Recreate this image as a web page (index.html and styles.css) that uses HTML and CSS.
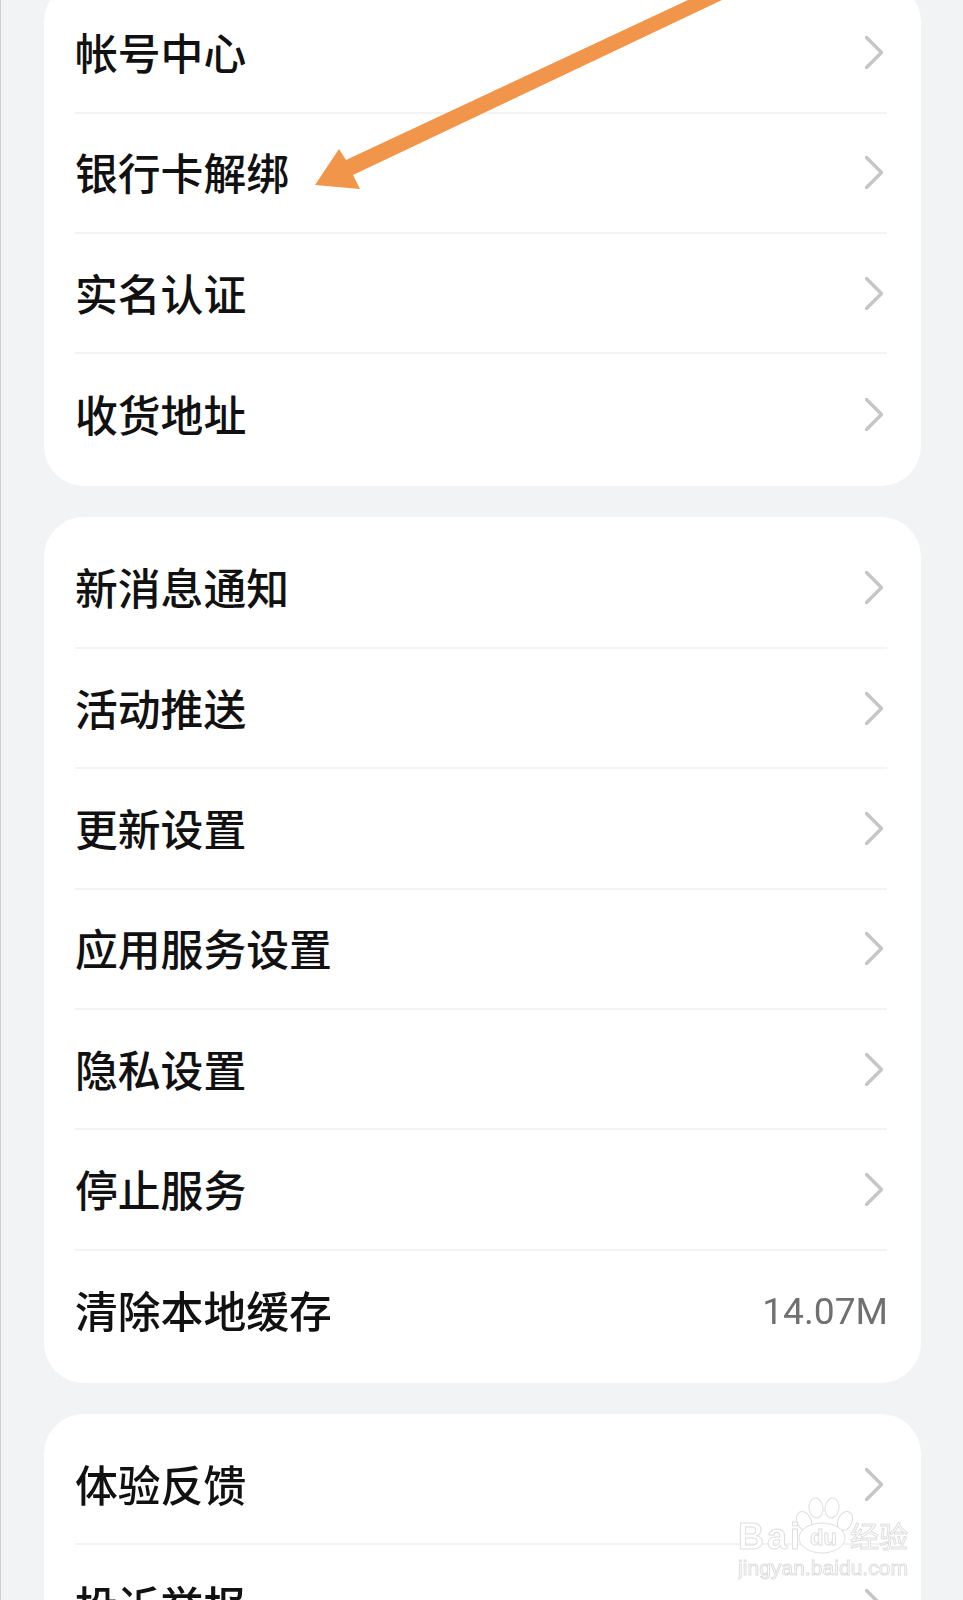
FILE: index.html
```html
<!DOCTYPE html>
<html lang="zh-CN">
<head>
    <meta charset="UTF-8">
    <meta name="viewport" content="width=device-width, initial-scale=1.0">
    <title>设置</title>
    <link rel="stylesheet" href="styles.css">
</head>
<body>
    <div class="settings">
        <div class="card">
            <div class="row"><span class="label">帐号中心</span><svg class="chevron" viewBox="0 0 18 33"><path d="M1.5 1.5 16.5 16.5 1.5 31.5"/></svg></div>
            <div class="row"><span class="label">银行卡解绑</span><svg class="chevron" viewBox="0 0 18 33"><path d="M1.5 1.5 16.5 16.5 1.5 31.5"/></svg></div>
            <div class="row"><span class="label">实名认证</span><svg class="chevron" viewBox="0 0 18 33"><path d="M1.5 1.5 16.5 16.5 1.5 31.5"/></svg></div>
            <div class="row"><span class="label">收货地址</span><svg class="chevron" viewBox="0 0 18 33"><path d="M1.5 1.5 16.5 16.5 1.5 31.5"/></svg></div>
        </div>

        <div class="card">
            <div class="row"><span class="label">新消息通知</span><svg class="chevron" viewBox="0 0 18 33"><path d="M1.5 1.5 16.5 16.5 1.5 31.5"/></svg></div>
            <div class="row"><span class="label">活动推送</span><svg class="chevron" viewBox="0 0 18 33"><path d="M1.5 1.5 16.5 16.5 1.5 31.5"/></svg></div>
            <div class="row"><span class="label">更新设置</span><svg class="chevron" viewBox="0 0 18 33"><path d="M1.5 1.5 16.5 16.5 1.5 31.5"/></svg></div>
            <div class="row"><span class="label">应用服务设置</span><svg class="chevron" viewBox="0 0 18 33"><path d="M1.5 1.5 16.5 16.5 1.5 31.5"/></svg></div>
            <div class="row"><span class="label">隐私设置</span><svg class="chevron" viewBox="0 0 18 33"><path d="M1.5 1.5 16.5 16.5 1.5 31.5"/></svg></div>
            <div class="row"><span class="label">停止服务</span><svg class="chevron" viewBox="0 0 18 33"><path d="M1.5 1.5 16.5 16.5 1.5 31.5"/></svg></div>
            <div class="row"><span class="label">清除本地缓存</span><span class="cache-size">14.07M</span></div>
        </div>

        <div class="card">
            <div class="row"><span class="label">体验反馈</span><svg class="chevron" viewBox="0 0 18 33"><path d="M1.5 1.5 16.5 16.5 1.5 31.5"/></svg></div>
            <div class="row"><span class="label">投诉举报</span><svg class="chevron" viewBox="0 0 18 33"><path d="M1.5 1.5 16.5 16.5 1.5 31.5"/></svg></div>
        </div>
    </div>

    <!-- annotation arrow on top of the list -->
    <svg class="arrow" viewBox="0 0 963 200">
        <polygon points="688,0 722,0 353,175 360,189 315,185 339,149 346,160"/>
    </svg>

    <!-- watermark -->
    <svg class="watermark" viewBox="0 0 180 90">
        <g class="paw">
            <ellipse cx="66" cy="26" rx="7" ry="10" transform="rotate(-25 66 26)"/>
            <ellipse cx="78" cy="13" rx="7" ry="10" transform="rotate(-8 78 13)"/>
            <ellipse cx="94" cy="13" rx="7" ry="10" transform="rotate(8 94 13)"/>
            <ellipse cx="107" cy="26" rx="7" ry="10" transform="rotate(25 107 26)"/>
            <ellipse cx="84" cy="43" rx="23" ry="15"/>
        </g>
        <text class="mark-big" x="0" y="54" textLength="62">Bai</text>
        <text class="mark-du" x="72" y="50">du</text>
        <text class="mark-cn" x="112" y="53" textLength="58">经验</text>
        <text class="mark-url" x="0" y="80" textLength="170">jingyan.baidu.com</text>
    </svg>
</body>
</html>
```

FILE: styles.css
```css
html, body {
    margin: 0;
    height: 1600px;
    overflow: hidden;
}

body {
    position: relative;
    background-color: #f2f3f5;
    font-family: "Noto Sans CJK SC", "Noto Sans", sans-serif;
    color: #111;
}

.settings {
    display: flex;
    flex-direction: column;
    gap: 31px;
    margin-top: -18px;
    padding: 0 42px 0 43px;
    border-left: 1px solid #cdd0d5;
    filter: blur(0.5px);
}

.card {
    background-color: #fff;
    border-radius: 40px;
    padding: 11.5px 34px 11.5px 31px;
}

.row {
    display: flex;
    justify-content: space-between;
    align-items: center;
    box-sizing: border-box;
    height: 120.33px;
    font-size: 42.8px;
    border-bottom: 2px solid #f3f3f3;
}

.row:last-child {
    border-bottom: none;
}

.label {
    margin-bottom: 3px;
    font-weight: 500;
}

.chevron {
    width: 18px;
    height: 33px;
    margin-right: 4px;
    fill: none;
    stroke: #c6c6c6;
    stroke-width: 3.5;
    stroke-linecap: round;
    stroke-linejoin: round;
}

.cache-size {
    margin-right: -1px;
    font-family: Roboto, sans-serif;
    font-size: 37.2px;
    color: #707070;
}

.arrow {
    position: absolute;
    top: 0;
    left: 0;
    width: 963px;
    height: 200px;
    fill: #f1954a;
}

.watermark {
    position: absolute;
    top: 1495px;
    left: 738px;
    width: 180px;
    height: 90px;
    fill: #fff;
    stroke: #dedede;
    stroke-width: 1;
}

.mark-big {
    font-family: "Liberation Sans", sans-serif;
    font-size: 36px;
    font-weight: bold;
}

.mark-du {
    font-family: "Liberation Sans", sans-serif;
    font-size: 22px;
    font-weight: bold;
}

.mark-cn {
    font-size: 29px;
}

.mark-url {
    font-family: "Liberation Sans", sans-serif;
    font-size: 21px;
}
```
